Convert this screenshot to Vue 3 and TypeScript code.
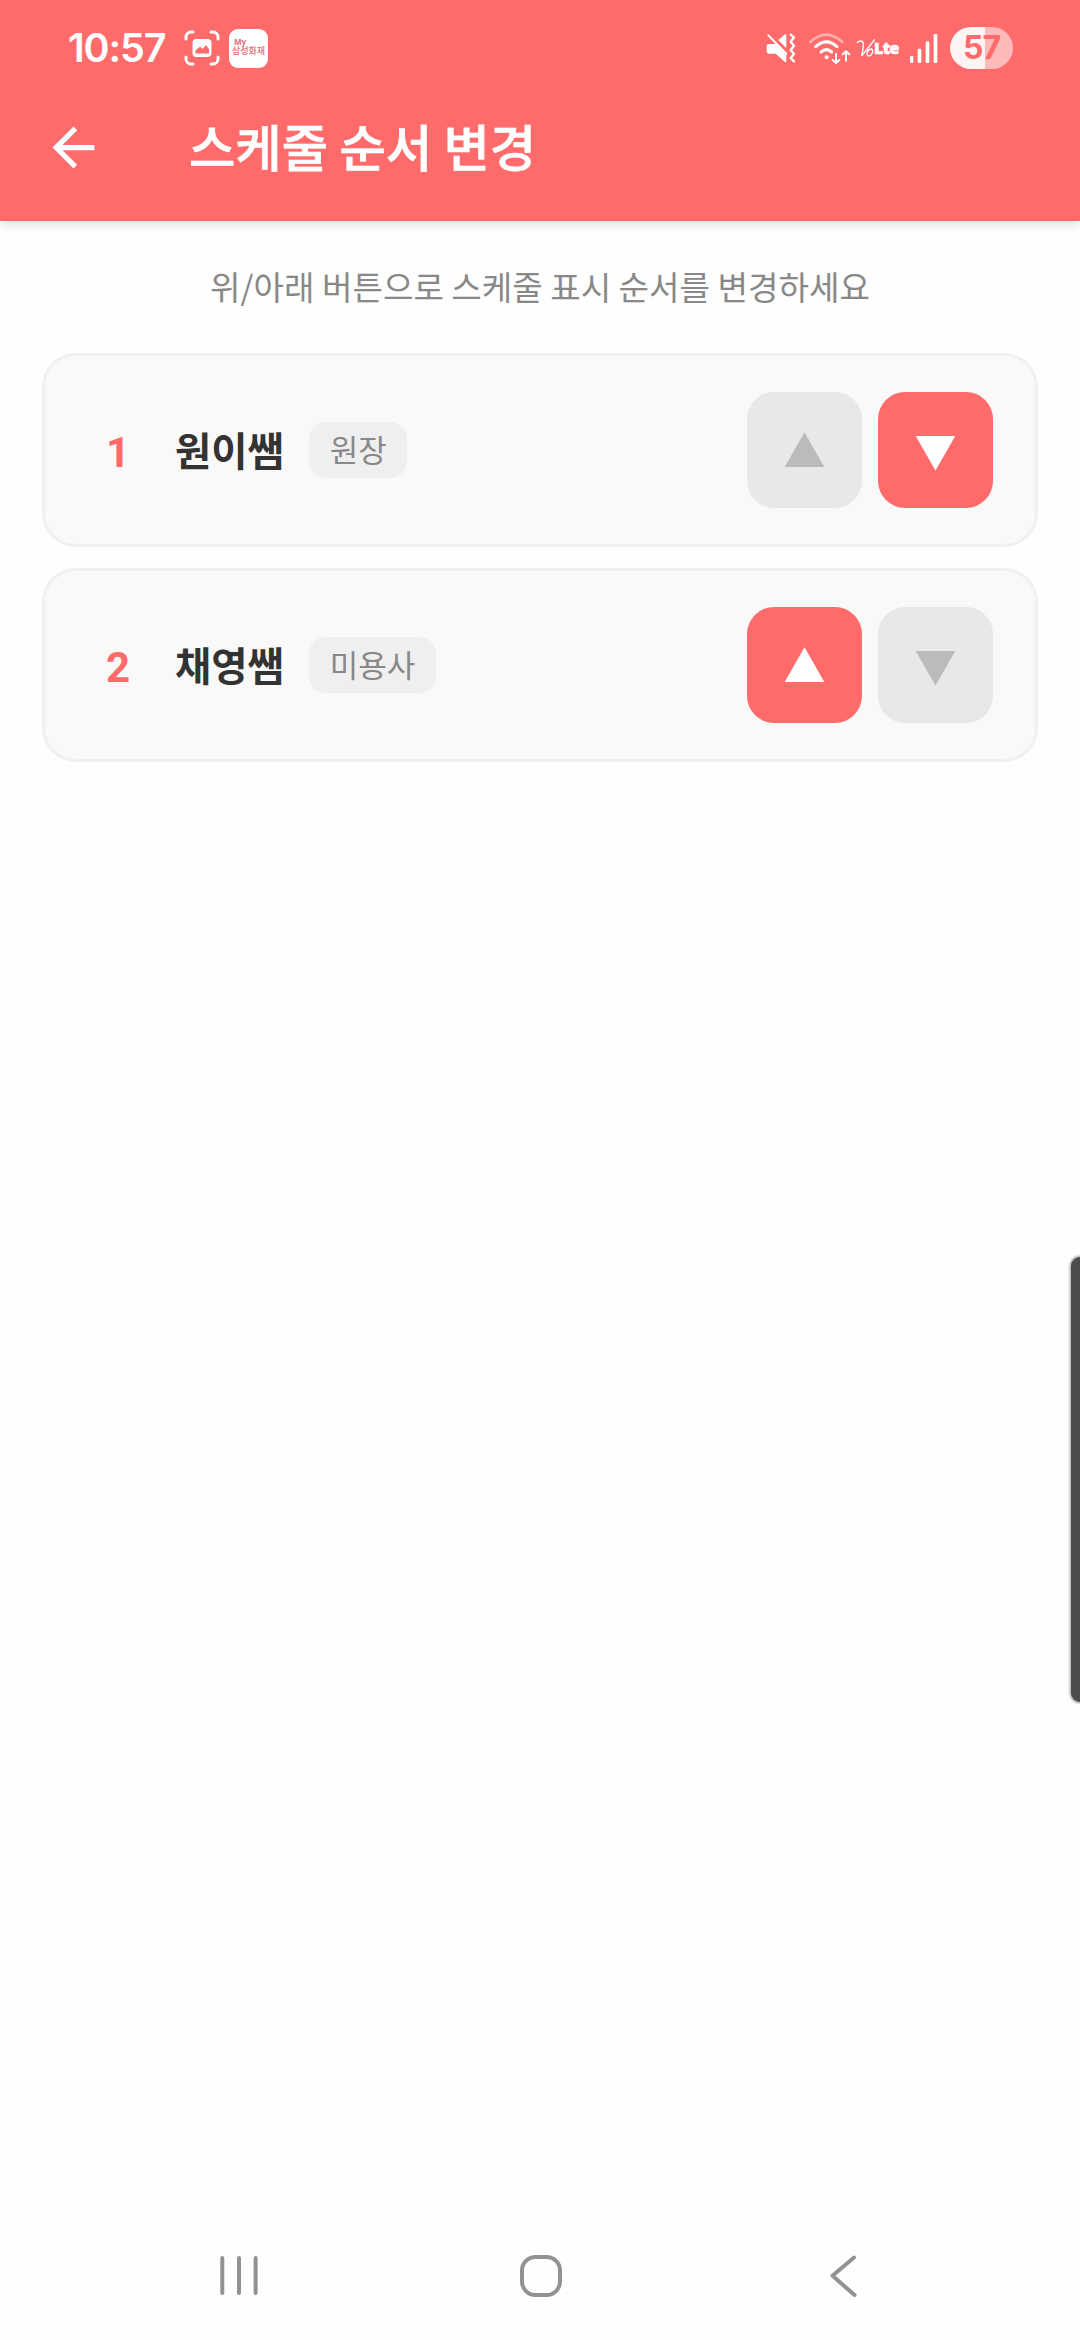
<script setup lang="ts">
import { ref } from 'vue'

interface Staff {
  id: number
  name: string
  role: string
}

const staff = ref<Staff[]>([
  { id: 1, name: '원이쌤', role: '원장' },
  { id: 2, name: '채영쌤', role: '미용사' },
])

function move(index: number, step: number): void {
  const target = index + step
  if (target < 0 || target >= staff.value.length) return
  const list = [...staff.value]
  const [item] = list.splice(index, 1)
  list.splice(target, 0, item)
  staff.value = list
}
</script>

<template>
  <div class="screen">
    <header class="header">
      <div class="status">
        <span class="time">10:57</span>
        <svg class="capture" viewBox="0 0 36 36" width="36" height="36" fill="none">
          <path d="M2 9V7a5 5 0 0 1 5-5h2M27 2h2a5 5 0 0 1 5 5v2M34 27v2a5 5 0 0 1-5 5h-2M9 34H7a5 5 0 0 1-5-5v-2" stroke="#fff" stroke-width="3" stroke-linecap="round" />
          <rect x="8.500" y="9" width="19" height="18" rx="4" fill="#fff" />
          <path d="M11.500 23.500v-3l4.500-4 2.500 2.500 3.500-4 3 4v4.500z" fill="#ff6b6b" />
        </svg>
        <div class="app-badge">
          <span class="app-my">My</span>
          <span class="app-name">삼성화재</span>
        </div>
        <span class="spacer"></span>
        <svg class="mute" viewBox="44 64 96 96" width="32" height="32" fill="none">
          <path d="M84 88L104 71Q108 69 108 74V113Z" fill="#fff" />
          <path d="M54 74L108 129V152Q108 157 104 154L76 129H56Q49 129 49 122V107Q49 100 56 100H76Z" fill="#fff" />
          <path d="M54 74L108 129" stroke="#fff" stroke-width="6" stroke-linecap="round" />
          <path d="M121 72L131 80L121 93L131 105L121 118L131 130L121 142L131 152" stroke="#fff" stroke-width="7" stroke-linecap="round" stroke-linejoin="round" />
        </svg>
        <svg class="wifi" viewBox="174 62 129 99" width="43" height="33" fill="none" stroke="#fff" stroke-linecap="round" stroke-linejoin="round">
          <path d="M181 92Q229 48 277 92" stroke-width="8" opacity=".45" />
          <path d="M197 106Q229 77 261 106" stroke-width="9" />
          <path d="M213 122Q229 108 245 122" stroke-width="9" />
          <circle cx="230" cy="138" r="6" fill="#fff" stroke="none" />
          <path d="M258 128V154M248 146L258 155L268 146M288 148V121M278 129L288 120L298 129" stroke-width="6" />
        </svg>
        <div class="volte">
          <svg viewBox="318 80 57 66" width="19" height="22" fill="none">
            <path d="M322 96Q336 88 339 96Q342 108 335 137Q350 118 374 88M363 116C350 118 347 137 357 137C367 136 373 118 363 116" stroke="#fff" stroke-width="4" stroke-linecap="round" />
          </svg>
          <span class="lte">Lte</span>
        </div>
        <svg class="signal" viewBox="477 66 90 93" width="30" height="31" fill="#fff">
          <rect x="480" y="135" width="10" height="21" rx="3" />
          <rect x="503" y="113" width="11" height="43" rx="4" />
          <rect x="527" y="91" width="11" height="65" rx="4" />
          <rect x="551" y="69" width="11" height="87" rx="4" />
        </svg>
        <div class="battery">57</div>
      </div>
      <div class="toolbar">
        <svg class="back" viewBox="0 0 24 24" width="63" height="63">
          <path fill="#fff" d="M20 11H7.830l5.590-5.590L12 4l-8 8 8 8 1.410-1.410L7.830 13H20v-2z" />
        </svg>
        <h1 class="title">스케줄 순서 변경</h1>
      </div>
    </header>

    <main class="content">
      <p class="hint">위/아래 버튼으로 스케줄 표시 순서를 변경하세요</p>
      <ul class="list">
        <li v-for="(person, i) in staff" :key="person.id" class="card">
          <span class="order">{{ i + 1 }}</span>
          <span class="name">{{ person.name }}</span>
          <span class="role">{{ person.role }}</span>
          <span class="spacer"></span>
          <button class="move" :disabled="i === 0" @click="move(i, -1)">
            <svg viewBox="0 0 115 116" width="115" height="116"><path d="M57.500 40.300L77.300 75H37.700Z" /></svg>
          </button>
          <button class="move" :disabled="i === staff.length - 1" @click="move(i, 1)">
            <svg viewBox="0 0 115 116" width="115" height="116"><path d="M57.500 78.500L77.300 44H37.700Z" /></svg>
          </button>
        </li>
      </ul>
    </main>

    <nav class="navbar">
      <svg class="recents" viewBox="0 0 42 42" width="42" height="42" stroke="#929292" stroke-width="4" stroke-linecap="round">
        <path d="M4.300 3V38M21 3V38M37.600 3V38" />
      </svg>
      <svg class="home" viewBox="0 0 42 42" width="42" height="42" fill="none" stroke="#929292" stroke-width="4">
        <rect x="2" y="2" width="38" height="38" rx="13.500" />
      </svg>
      <svg class="prev" viewBox="0 0 30 42" width="30" height="42" fill="none" stroke="#929292" stroke-width="4" stroke-linecap="round" stroke-linejoin="round">
        <path d="M25 2.500L3.500 20.800L25.500 40" />
      </svg>
    </nav>

    <div class="edge-handle"></div>
  </div>
</template>

<style>
body {
  margin: 0;
  background: #fefefe;
}
</style>

<style scoped>
.screen {
  display: flex;
  flex-direction: column;
  width: 1080px;
  height: 2340px;
  overflow: hidden;
  background: #fefefe;
  font-family: "Noto Sans CJK KR", sans-serif;
}
.header {
  height: 221px;
  flex: none;
  background: #ff6b6b;
  color: #fff;
  box-shadow: 0 2px 12px rgba(0, 0, 0, 0.16);
}
.status {
  display: flex;
  align-items: center;
  height: 96px;
  padding: 0 67px 0 68px;
}
.time {
  width: 116px;
  font: 600 39.500px/48px Inter, sans-serif;
  letter-spacing: -1.100px;
  white-space: nowrap;
}
.capture {
  margin-right: 9px;
}
.app-badge {
  display: flex;
  flex-direction: column;
  box-sizing: border-box;
  width: 39px;
  height: 39px;
  padding: 8px 0 0 3px;
  border-radius: 9px;
  background: #fff;
  color: #e06a72;
}
.app-my {
  padding-left: 2px;
  font: 700 8px/9px "Open Sans", sans-serif;
}
.app-name {
  font-size: 9px;
  font-weight: 500;
  line-height: 10px;
  white-space: nowrap;
}
.spacer {
  flex: 1;
}
.mute {
  margin-right: 11px;
}
.wifi {
  margin-right: 5px;
}
.volte {
  display: flex;
  align-items: center;
  width: 43px;
  margin-right: 10px;
}
.lte {
  margin-left: -1px;
  font: 800 16px/24px "Open Sans", sans-serif;
  letter-spacing: -0.500px;
  -webkit-text-stroke: 0.600px #fff;
}
.signal {
  margin-right: 11px;
}
.battery {
  width: 63px;
  height: 42px;
  border-radius: 21px;
  background: linear-gradient(90deg, #fff3f3 55%, #ffb9b9 55%);
  color: #ff6b6b;
  font: 700 32px/42px Inter, sans-serif;
  letter-spacing: -1px;
  text-align: center;
}
.toolbar {
  display: flex;
  align-items: center;
  height: 102px;
  padding-left: 42px;
}
.title {
  margin: 0 0 2px 84px;
  font-size: 50.400px;
  font-weight: 500;
  line-height: 100px;
  -webkit-text-stroke: 0.700px #fff;
}
.content {
  flex: 1;
}
.hint {
  margin: 40px 0 42px;
  color: #888;
  font-size: 33.150px;
  line-height: 50px;
  text-align: center;
}
.list {
  display: flex;
  flex-direction: column;
  gap: 21px;
  margin: 0 42px;
  padding: 0;
  list-style: none;
}
.card {
  display: flex;
  align-items: center;
  box-sizing: border-box;
  height: 194px;
  padding: 0 42px 0 41px;
  border: 3px solid #f0f0f0;
  border-radius: 34px;
  background: #f9f9f9;
}
.order {
  width: 64px;
  padding-top: 5px;
  color: #ff6b6b;
  font: 700 42px/60px Roboto, sans-serif;
  text-align: center;
}
.name {
  margin: 0 25.500px 0 25px;
  padding-bottom: 2px;
  color: #333;
  font-size: 39.400px;
  font-weight: 700;
  line-height: 58px;
}
.role {
  padding: 0 20.500px 2px;
  border-radius: 17px;
  background: #efefef;
  color: #888;
  font-size: 31px;
  line-height: 54px;
}
.move {
  width: 115px;
  height: 116px;
  padding: 0;
  border: 0;
  border-radius: 27px;
  background: #ff6b6b;
  fill: #fff;
}
.move + .move {
  margin-left: 16px;
}
.move:disabled {
  background: #e8e8e8;
  fill: #bbb;
}
.move svg {
  display: block;
}
.navbar {
  display: flex;
  align-items: center;
  flex: none;
  height: 128px;
  padding-left: 218px;
}
.home {
  margin-left: 260px;
}
.prev {
  margin-left: 267px;
}
.edge-handle {
  position: absolute;
  top: 1257px;
  left: 1070.500px;
  width: 9.500px;
  height: 445px;
  border-radius: 11px 0 0 11px;
  background: #4d4d4d;
  box-shadow: 0 0 2px 1.500px #b0b0b0;
}
</style>
